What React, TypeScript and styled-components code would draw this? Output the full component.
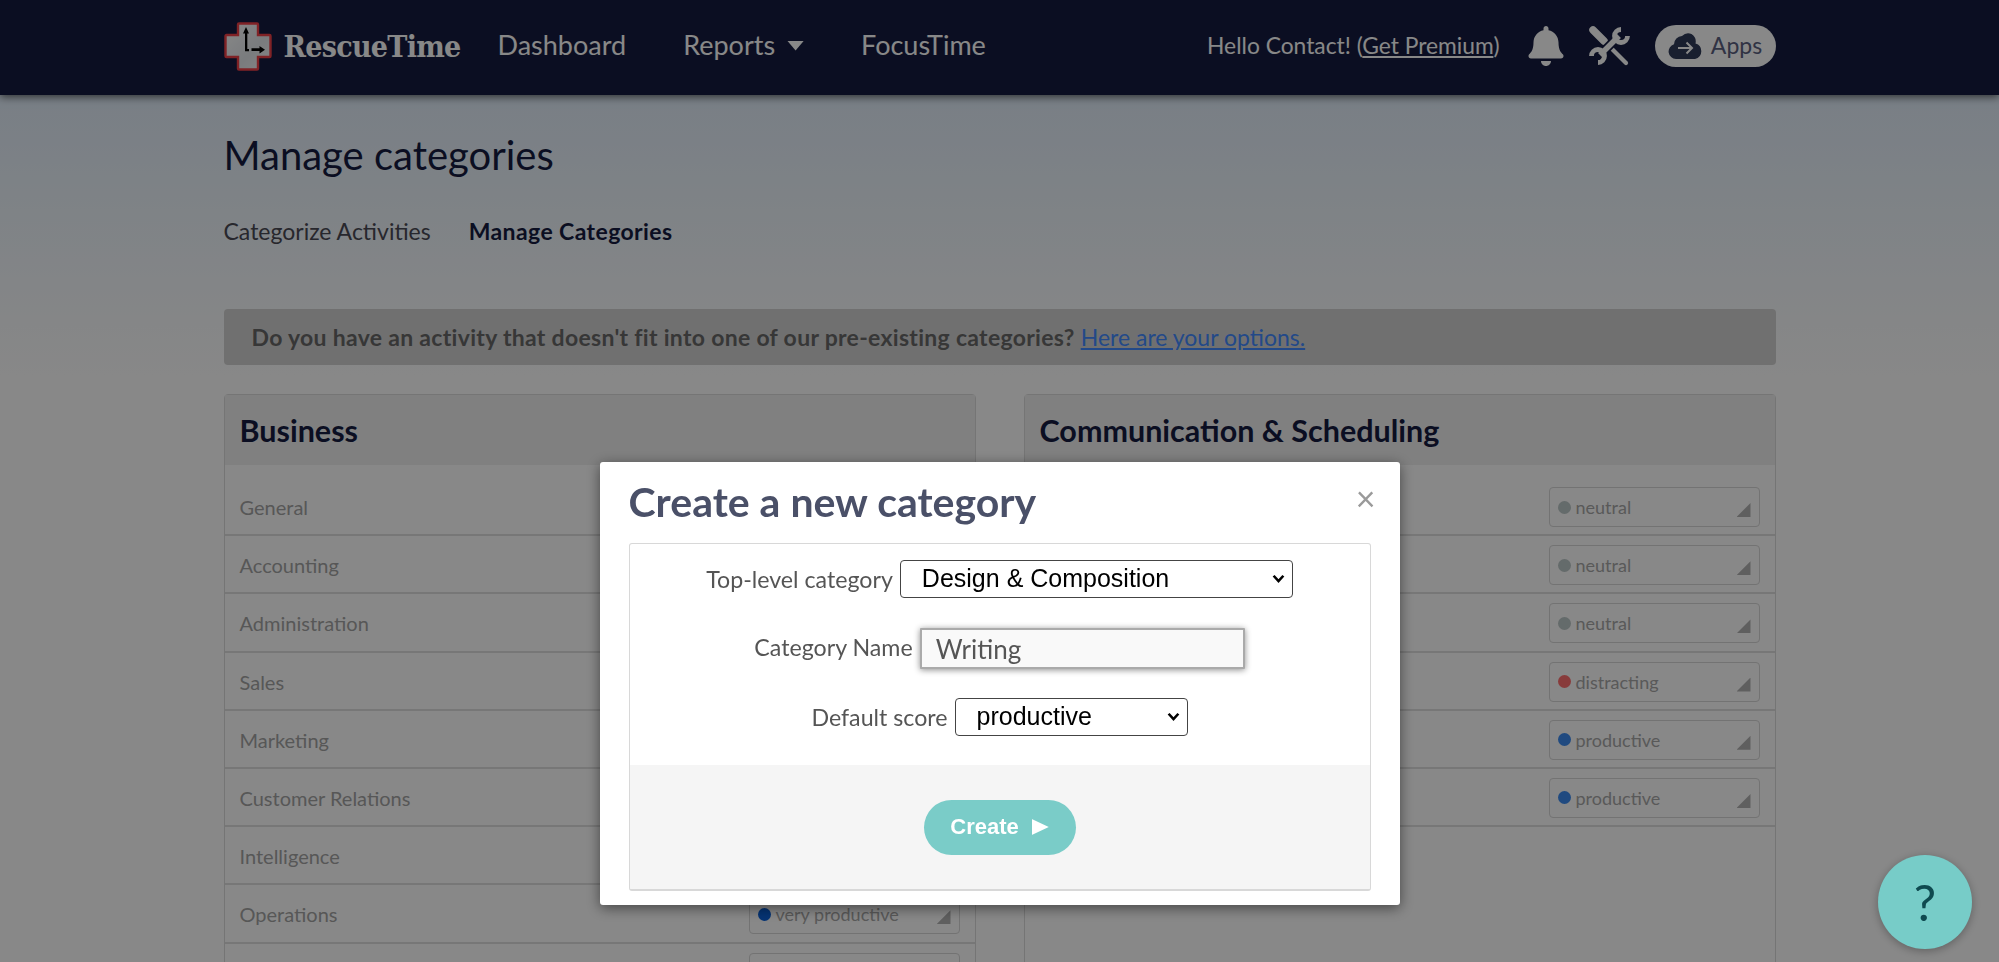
import React from "react";
import styled, { createGlobalStyle } from "styled-components";
import { FaBell } from "react-icons/fa";

const FONT = `"Lato", "Open Sans", sans-serif`;

const GlobalStyle = createGlobalStyle`
  html, body {
    margin: 0;
    height: 962px;
    overflow: hidden;
    background: #fff;
    font-family: ${FONT};
  }
  * { box-sizing: border-box; }
`;

const Header = styled.header`
  height: 95px;
  background: #151c40;
  box-shadow: 0 2px 8px rgba(0, 0, 0, 0.6);
  position: relative;
`;

const Container = styled.div`
  width: 1552px;
  margin: 0 auto;
`;

const HeaderInner = styled(Container)`
  height: 100%;
  padding-bottom: 3px;
  display: flex;
  align-items: center;
  color: #fff;
`;

const Logo = styled.div`
  display: flex;
  align-items: center;
  gap: 12px;
  width: 274px;
  font-family: "DejaVu Serif Condensed", "DejaVu Serif", serif;
  font-weight: 700;
  font-size: 30px;
  letter-spacing: -0.7px;
`;

const NavLink = styled.a`
  font-size: 27px;
  margin-right: 57px;
  margin-bottom: 4px;
  display: flex;
  align-items: center;
  gap: 12px;
`;

const Caret = styled.span`
  width: 17px;
  height: 10px;
  background: #fff;
  clip-path: polygon(0 0, 100% 0, 50% 100%);
  margin-top: 3px;
`;

const UserArea = styled.div`
  margin-left: auto;
  display: flex;
  align-items: center;
  font-size: 22.8px;
`;

const Hello = styled.span`
  margin-right: 26px;
  margin-bottom: 3px;
  a { text-decoration: underline; }
`;

const IconSlot = styled.span<{ $gap: number }>`
  display: flex;
  margin-right: ${(p) => p.$gap}px;
  font-size: 40px;
`;

const AppsPill = styled.div`
  width: 121px;
  height: 42px;
  border-radius: 21px;
  background: #fff;
  color: #5a6080;
  display: flex;
  align-items: center;
  justify-content: center;
  gap: 8px;
  font-size: 23px;
  span { margin-bottom: 2px; }
`;

const Main = styled.main`
  background: linear-gradient(#e2eefa 0, #fff 280px);
  height: 867px;
  overflow: hidden;
`;

const Title = styled.h1`
  margin: 0;
  padding-top: 36px;
  font-size: 40px;
  line-height: 48px;
  font-weight: 400;
  color: #151c40;
`;

const Tabs = styled.nav`
  display: flex;
  gap: 38px;
  margin-top: 38px;
  font-size: 23px;
  line-height: 28px;
`;

const Tab = styled.a<{ $active?: boolean }>`
  color: ${(p) => (p.$active ? "#151c40" : "#4a4a55")};
  font-weight: ${(p) => (p.$active ? 700 : 400)};
  letter-spacing: ${(p) => (p.$active ? "0.4px" : "0")};
`;

const Banner = styled.div`
  margin-top: 64px;
  height: 56px;
  border-radius: 4px;
  background: #d3d3d3;
  color: #686868;
  font-weight: 700;
  font-size: 23px;
  letter-spacing: 0.3px;
  padding-left: 28px;
  display: flex;
  align-items: center;
  gap: 6px;
  a {
    color: #4289ff;
    font-weight: 400;
    letter-spacing: 0;
    text-decoration: underline;
  }
`;

const Columns = styled.div`
  display: grid;
  grid-template-columns: 752px 752px;
  justify-content: space-between;
  margin-top: 29px;
`;

const Panel = styled.section`
  border: 1px solid #dcdcdc;
  border-radius: 4px 4px 0 0;
  height: 700px;
`;

const PanelHead = styled.h2`
  margin: 0;
  height: 70px;
  padding-left: 15px;
  background: #f0f0f0;
  color: #151c40;
  font-size: 30.500px;
  font-weight: 700;
  display: flex;
  align-items: center;
`;

const RowList = styled.div`
  padding-top: 13px;
`;

const Row = styled.div`
  height: 58.2px;
  padding: 9px 15px 0 15px;
  border-bottom: 2px solid #e0e0e0;
  color: #a4a4a4;
  font-size: 20px;
  display: flex;
  align-items: flex-start;
  justify-content: space-between;
`;

const RowLabel = styled.span`
  line-height: 40px;
`;

const Pill = styled.div`
  position: relative;
  margin-left: auto;
  width: 211px;
  height: 40px;
  border: 1px solid #d8d8d8;
  border-radius: 4px;
  padding-left: 8px;
  display: flex;
  align-items: center;
  gap: 5px;
  font-size: 18px;
  color: #a8a8a8;
`;

const Dot = styled.span<{ $color: string }>`
  width: 13px;
  height: 13px;
  border-radius: 50%;
  background: ${(p) => p.$color};
`;

const Corner = styled.span`
  position: absolute;
  right: 8px;
  bottom: 9px;
  width: 14px;
  height: 14px;
  background: #b3b3b3;
  clip-path: polygon(100% 0, 100% 100%, 0 100%);
`;

const Overlay = styled.div`
  position: fixed;
  inset: 0;
  background: rgba(0, 0, 0, 0.467);
  display: flex;
  justify-content: center;
  padding-top: 462px;
`;

const Modal = styled.div`
  width: 800px;
  height: 443px;
  background: #fff;
  border-radius: 3px;
  box-shadow: 0 3px 14px rgba(0, 0, 0, 0.5);
  padding: 0 29px;
  position: relative;
`;

const ModalTitle = styled.h3`
  margin: 0;
  height: 81px;
  padding-bottom: 3px;
  display: flex;
  align-items: center;
  color: #4a5068;
  font-size: 41px;
  font-weight: 700;
`;

const Close = styled.span`
  position: absolute;
  right: 24px;
  top: 14px;
  color: #9a9a9a;
  font-size: 34px;
  line-height: 44px;
`;

const FormBox = styled.div`
  height: 348px;
  border: 1px solid #d8d8d8;
  border-bottom-width: 2px;
  border-radius: 3px;
  display: flex;
  flex-direction: column;
  overflow: hidden;
`;

const FormFields = styled.div`
  height: 221px;
  padding-top: 16px;
`;

const FormRow = styled.div<{ $height: number }>`
  height: ${(p) => p.$height}px;
  display: flex;
  justify-content: center;
  align-items: flex-start;
  gap: 7px;
`;

const FieldLabel = styled.label`
  font-size: 23.2px;
  line-height: 38px;
  color: #555;
`;

const SelectWrap = styled.span<{ $width: number }>`
  position: relative;
  display: block;
  width: ${(p) => p.$width}px;
  height: 38px;
`;

const NativeSelect = styled.select`
  appearance: none;
  width: 100%;
  height: 100%;
  padding: 0 0 2px 21px;
  font-family: "Liberation Sans", Arial, sans-serif;
  font-size: 25px;
  color: #000;
  background: #fff;
  border: 1px solid #444;
  border-radius: 4px;
`;

const Chevron = styled.svg`
  position: absolute;
  right: 8px;
  top: 14px;
  width: 13px;
  height: 10px;
  pointer-events: none;
`;

const TextInput = styled.input`
  width: 325px;
  height: 41px;
  padding-left: 14px;
  font-family: ${FONT};
  font-size: 26px;
  color: #555;
  background: #f9f9f9;
  border: 2px solid #aaa;
  border-radius: 1px;
  box-shadow: 0 1px 6px rgba(0, 0, 0, 0.45);
`;

const FormFooter = styled.div`
  flex: 1;
  background: #f5f5f5;
  display: flex;
  align-items: center;
  justify-content: center;
`;

const CreateButton = styled.button`
  width: 152px;
  height: 55px;
  border: none;
  border-radius: 28px;
  background: #7accc8;
  color: #fff;
  font-family: "Liberation Sans", Arial, sans-serif;
  font-weight: 700;
  font-size: 22px;
  display: flex;
  align-items: center;
  justify-content: center;
  gap: 13px;
`;

const PlayIcon = styled.span`
  width: 17px;
  height: 16px;
  background: #fff;
  clip-path: polygon(0 0, 100% 50%, 0 100%);
`;

const HelpButton = styled.div`
  position: fixed;
  left: 1878px;
  top: 855px;
  width: 94px;
  height: 94px;
  border-radius: 50%;
  background: #77ccc8;
  color: #0f4a50;
  font-size: 50px;
  display: flex;
  align-items: center;
  justify-content: center;
  box-shadow: 0 2px 10px rgba(0, 0, 0, 0.3);
`;

const SCORES: Record<string, string> = {
  neutral: "#bcc8c8",
  distracting: "#ff7070",
  productive: "#3c8cf0",
  "very productive": "#0a60d8",
};

const leftRows = [
  { label: "General" },
  { label: "Accounting" },
  { label: "Administration" },
  { label: "Sales" },
  { label: "Marketing" },
  { label: "Customer Relations" },
  { label: "Intelligence" },
  { label: "Operations", score: "very productive" },
  { label: "" },
];

const rightRows = ["neutral", "neutral", "neutral", "distracting", "productive", "productive"];

const ScorePill = ({ score }: { score?: string }) => (
  <Pill>
    {score && <Dot $color={SCORES[score]} />}
    {score}
    <Corner />
  </Pill>
);

const Logomark = () => (
  <svg width="48" height="49" viewBox="0 0 48 49">
    <defs>
      <linearGradient id="crossFill" x1="0" y1="0" x2="1" y2="1">
        <stop offset="0" stopColor="#fff" />
        <stop offset="0.6" stopColor="#e4e8ec" />
        <stop offset="1" stopColor="#fafafa" />
      </linearGradient>
    </defs>
    <path
      d="M15 1.500h18a1 1 0 0 1 1 1V13h11.500a1 1 0 0 1 1 1v20a1 1 0 0 1-1 1H34v11.500a1 1 0 0 1-1 1H15a1 1 0 0 1-1-1V35H2.500a1 1 0 0 1-1-1V14a1 1 0 0 1 1-1H14V2.500a1 1 0 0 1 1-1z"
      fill="url(#crossFill)"
      stroke="#f04048"
      strokeWidth="2.4"
    />
    <path d="M22 5l3 6.500h-1.700V27h1.700v2.200h-4V11.500H19z" fill="#000" />
    <path d="M27.500 26.300h8V24l5.500 3.700-5.500 3.700v-2.300h-8z" fill="#000" />
  </svg>
);

const ToolsIcon = () => (
  <svg width="41" height="40" viewBox="0 0 41 40" fill="none" strokeLinecap="round">
    <path d="M4 4l11 11" stroke="#fff" strokeWidth="7.500" />
    <path d="M15 15l22 22" stroke="#fff" strokeWidth="4.200" />
    <path d="M30 10L11 29" stroke="#151c40" strokeWidth="9" strokeLinecap="butt" />
    <path d="M30 10L11 29" stroke="#fff" strokeWidth="5.500" strokeLinecap="butt" />
    <path d="M32 3.500A6.500 6.500 0 1 0 38.500 10" stroke="#fff" strokeWidth="4.800" strokeLinecap="butt" />
    <path d="M2.500 30A6.500 6.500 0 1 1 9 36.500" stroke="#fff" strokeWidth="4.800" strokeLinecap="butt" />
  </svg>
);

const CloudIcon = () => (
  <svg width="35" height="26" viewBox="0 0 35 26">
    <path
      d="M8 26a7.500 7.500 0 0 1-2-14.700A8.500 8.500 0 0 1 14 3a9 9 0 0 1 9.500-2 9 9 0 0 1 4 9.500A8 8 0 0 1 27 26z"
      fill="#2f3a58"
    />
    <path d="M10 15h14M18.500 9.500L24 15l-5.500 5.500" fill="none" stroke="#fff" strokeWidth="2" />
  </svg>
);

const SelectChevron = () => (
  <Chevron viewBox="0 0 12 9">
    <path d="M1.500 1.500L6 6.500l4.500-5" fill="none" stroke="#000" strokeWidth="2.400" />
  </Chevron>
);

export default function App() {
  return (
    <>
      <GlobalStyle />
      <Header>
        <HeaderInner>
          <Logo>
            <Logomark />
            RescueTime
          </Logo>
          <NavLink>Dashboard</NavLink>
          <NavLink>
            Reports <Caret />
          </NavLink>
          <NavLink>FocusTime</NavLink>
          <UserArea>
            <Hello>
              Hello Contact! (<a>Get Premium</a>)
            </Hello>
            <IconSlot $gap={23}>
              <FaBell />
            </IconSlot>
            <IconSlot $gap={25}>
              <ToolsIcon />
            </IconSlot>
            <AppsPill>
              <CloudIcon />
              <span>Apps</span>
            </AppsPill>
          </UserArea>
        </HeaderInner>
      </Header>
      <Main>
        <Container>
          <Title>Manage categories</Title>
          <Tabs>
            <Tab>Categorize Activities</Tab>
            <Tab $active>Manage Categories</Tab>
          </Tabs>
          <Banner>
            Do you have an activity that doesn't fit into one of our pre-existing categories?
            <a>Here are your options.</a>
          </Banner>
          <Columns>
            <Panel>
              <PanelHead>Business</PanelHead>
              <RowList>
                {leftRows.map((row, i) => (
                  <Row key={i}>
                    <RowLabel>{row.label}</RowLabel>
                    <ScorePill score={row.score} />
                  </Row>
                ))}
              </RowList>
            </Panel>
            <Panel>
              <PanelHead>Communication &amp; Scheduling</PanelHead>
              <RowList>
                {rightRows.map((score, i) => (
                  <Row key={i}>
                    <ScorePill score={score} />
                  </Row>
                ))}
              </RowList>
            </Panel>
          </Columns>
        </Container>
      </Main>
      <Overlay>
        <Modal>
          <ModalTitle>Create a new category</ModalTitle>
          <Close>×</Close>
          <FormBox>
            <FormFields>
              <FormRow $height={68}>
                <FieldLabel>Top-level category</FieldLabel>
                <SelectWrap $width={393}>
                  <NativeSelect defaultValue="design">
                    <option value="design">Design &amp; Composition</option>
                  </NativeSelect>
                  <SelectChevron />
                </SelectWrap>
              </FormRow>
              <FormRow $height={70}>
                <FieldLabel>Category Name</FieldLabel>
                <TextInput defaultValue="Writing" />
              </FormRow>
              <FormRow $height={40}>
                <FieldLabel>Default score</FieldLabel>
                <SelectWrap $width={233}>
                  <NativeSelect defaultValue="productive">
                    <option value="productive">productive</option>
                  </NativeSelect>
                  <SelectChevron />
                </SelectWrap>
              </FormRow>
            </FormFields>
            <FormFooter>
              <CreateButton>
                Create <PlayIcon />
              </CreateButton>
            </FormFooter>
          </FormBox>
        </Modal>
      </Overlay>
      <HelpButton>?</HelpButton>
    </>
  );
}
